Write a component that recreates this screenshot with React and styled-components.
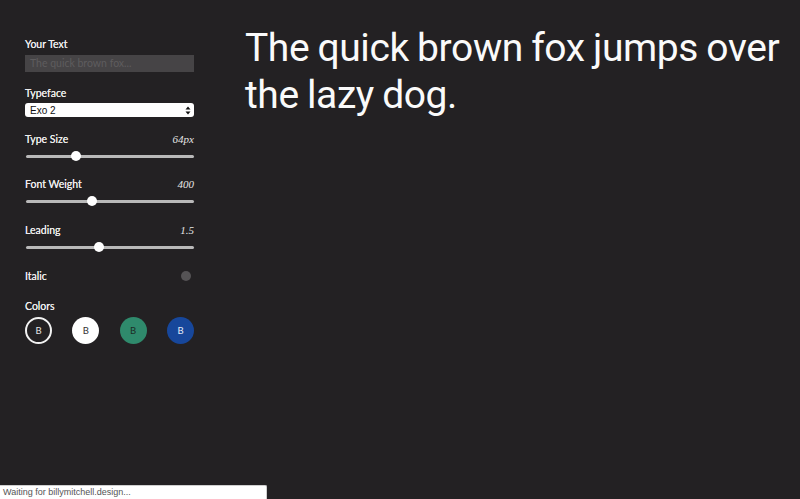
import React from "react";
import styled, { createGlobalStyle } from "styled-components";

const Global = createGlobalStyle`
  html, body { margin: 0; padding: 0; background: #232123; }
  body { width: 800px; height: 499px; overflow: hidden; font-family: Lato, "Open Sans", sans-serif; }
  #root { height: 499px; }
`;

const Page = styled.div`
  position: relative;
  display: flex;
  height: 499px;
  background: #232123;
`;

const Sidebar = styled.aside`
  width: 169px;
  padding: 37px 0 0 25px;
  display: flex;
  flex-direction: column;
  flex-shrink: 0;
`;

const Field = styled.div`
  display: flex;
  flex-direction: column;
  margin-bottom: ${(p) => p.$mb || 0}px;
`;

const LabelRow = styled.div`
  display: flex;
  justify-content: space-between;
  align-items: center;
  height: 14px;
  margin-bottom: ${(p) => p.$mb || 4}px;
`;

const Label = styled.span`
  font-family: Lato, sans-serif;
  font-size: 10.5px;
  color: #ececec;
  text-shadow: 0 0 0.4px #ececec;
`;

const Value = styled.span`
  font-family: "Liberation Serif", serif;
  font-style: italic;
  font-size: 11px;
  color: #e6e6e6;
`;

const TextInput = styled.div`
  height: 17px;
  background: #464446;
  font-family: Lato, sans-serif;
  font-size: 10.5px;
  color: #5e5c5e;
  padding-left: 5px;
  line-height: 17px;
`;

const Select = styled.div`
  height: 14px;
  background: #fff;
  border-radius: 3px;
  display: flex;
  align-items: center;
  justify-content: space-between;
  padding: 0 3px 0 5px;
  font-family: "Liberation Sans", Arial, sans-serif;
  font-size: 10px;
  color: #111;
`;

const Track = styled.div`
  position: relative;
  height: 3px;
  background: #b9b9b9;
  border-radius: 2px;
  margin: 5px 0 0 1px;
`;

const Thumb = styled.div`
  position: absolute;
  top: -4px;
  width: 10px;
  height: 10px;
  border-radius: 50%;
  background: #fff;
  transform: translateX(-5px);
`;

const ToggleRow = styled.div`
  display: flex;
  justify-content: space-between;
  align-items: center;
  padding-right: 3px;
  margin-bottom: 17px;
`;

const ToggleDot = styled.div`
  width: 10px;
  height: 10px;
  border-radius: 50%;
  background: #555355;
`;

const Swatches = styled.div`
  display: flex;
  justify-content: space-between;
  margin-top: 1px;
`;

const Swatch = styled.div`
  width: 27px;
  height: 27px;
  box-sizing: border-box;
  border-radius: 50%;
  background: ${(p) => p.$bg};
  border: ${(p) => p.$border || "none"};
  color: ${(p) => p.$fg};
  display: flex;
  align-items: center;
  justify-content: center;
  font-family: Lato, sans-serif;
  font-size: 9.5px;
`;

const Preview = styled.main`
  flex: 1;
  padding: 25px 0 0 51px;
`;

const PreviewText = styled.p`
  margin: 0;
  font-family: Roboto, "Noto Sans", sans-serif;
  font-size: 39px;
  line-height: 47px;
  color: #fafafa;
  letter-spacing: -0.4px;
  word-spacing: -1px;
  width: 550px;
`;

const Status = styled.div`
  position: absolute;
  left: 0;
  bottom: 0;
  width: 263px;
  height: 13px;
  background: #fff;
  border: 1px solid #cfcfcf;
  border-left: none;
  border-bottom: none;
  border-top-right-radius: 2px;
  font-family: "Liberation Sans", Arial, sans-serif;
  font-size: 9px;
  line-height: 13px;
  color: #555;
  padding-left: 3px;
`;

const Arrows = () => (
  <svg width="6" height="9" viewBox="0 0 6 9">
    <path d="M3 0.5 L5.5 3.5 H0.5 Z M3 8.5 L5.5 5.5 H0.5 Z" fill="#111" />
  </svg>
);

const Slider = ({ pos }) => (
  <Track>
    <Thumb style={{ left: `${pos}%` }} />
  </Track>
);

export default function App() {
  return (
    <Page>
      <Global />
      <Sidebar>
        <Field $mb={14}>
          <LabelRow $mb={4}><Label>Your Text</Label></LabelRow>
          <TextInput>The quick brown fox...</TextInput>
        </Field>
        <Field $mb={15}>
          <LabelRow $mb={3}><Label>Typeface</Label></LabelRow>
          <Select>Exo 2<Arrows /></Select>
        </Field>
        <Field $mb={19}>
          <LabelRow><Label>Type Size</Label><Value>64px</Value></LabelRow>
          <Slider pos={29.5} />
        </Field>
        <Field $mb={20}>
          <LabelRow><Label>Font Weight</Label><Value>400</Value></LabelRow>
          <Slider pos={39} />
        </Field>
        <Field $mb={21}>
          <LabelRow><Label>Leading</Label><Value>1.5</Value></LabelRow>
          <Slider pos={43.5} />
        </Field>
        <ToggleRow>
          <Label>Italic</Label>
          <ToggleDot />
        </ToggleRow>
        <Field>
          <LabelRow $mb={3}><Label>Colors</Label></LabelRow>
          <Swatches>
            <Swatch $bg="transparent" $border="2px solid #f2f2f2" $fg="#e6e6e6">B</Swatch>
            <Swatch $bg="#ffffff" $fg="#333">B</Swatch>
            <Swatch $bg="#2f8a6c" $fg="#1d2a25">B</Swatch>
            <Swatch $bg="#17479b" $fg="#e6ecf8">B</Swatch>
          </Swatches>
        </Field>
      </Sidebar>
      <Preview>
        <PreviewText>The quick brown fox jumps over the lazy dog.</PreviewText>
      </Preview>
      <Status>Waiting for billymitchell.design...</Status>
    </Page>
  );
}
